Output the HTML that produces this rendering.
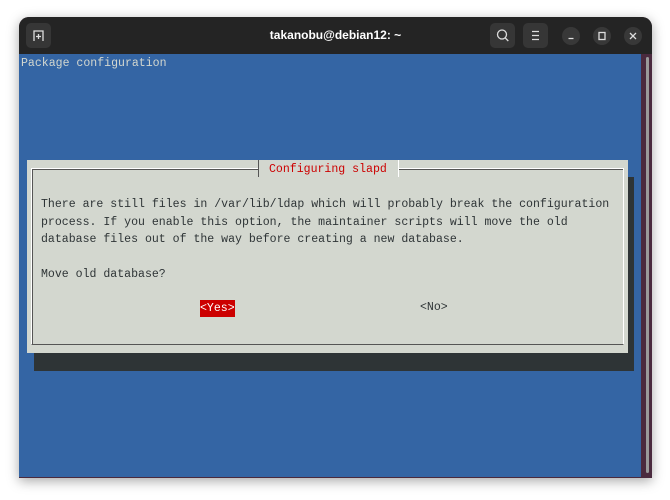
<!DOCTYPE html>
<html><head><style>
body{margin:0;width:670px;height:500px;background:#fff;position:relative;overflow:hidden;font-family:"Liberation Mono",monospace;}
.win{position:absolute;left:19px;top:17px;width:633px;height:461px;background:#4a2a3e;border-radius:10px 10px 0 0;box-shadow:0 3px 12px rgba(0,0,0,.35);overflow:hidden}
.tb{position:absolute;left:0;top:0;width:633px;height:37px;background:#242424;}
.title{position:absolute;left:0;right:0;top:11px;text-align:center;color:#fff;font:bold 12px "Liberation Sans",sans-serif}
.btn{position:absolute;top:6px;width:25px;height:25px;background:#363636;border-radius:5px}
.cbtn{position:absolute;top:10px;width:18px;height:18px;border-radius:50%;background:#383838}
.term{position:absolute;left:0;top:37px;width:622px;height:423px;background:#3465a4}
.sb{position:absolute;left:627px;top:40px;width:3px;height:416px;background:#9a9a9a;border-radius:2px}
.t{position:absolute;font-size:11.55px;line-height:17.6px;white-space:pre;color:#2e3436}
</style></head><body>
<div class="win">
 <div class="tb">
  <div class="btn" style="left:7px"><svg width="25" height="25"><path d="M8 18V8h9v10M12.5 11v5M10 13.5h5" stroke="#ddd" stroke-width="1.3" fill="none"/></svg></div>
  <div class="title">takanobu@debian12: ~</div>
  <div class="btn" style="left:471px"><svg width="25" height="25"><circle cx="12" cy="11.5" r="4.5" stroke="#ddd" stroke-width="1.3" fill="none"/><path d="M15.3 15l3 3" stroke="#ddd" stroke-width="1.3"/></svg></div>
  <div class="btn" style="left:504px"><svg width="25" height="25"><path d="M9 8.5h7M9 12.5h7M9 16.5h7" stroke="#ddd" stroke-width="1.3"/></svg></div>
  <div class="cbtn" style="left:543px"><svg width="18" height="18"><path d="M6.5 11.5h5" stroke="#ddd" stroke-width="1.3"/></svg></div>
  <div class="cbtn" style="left:574px"><svg width="18" height="18"><rect x="6" y="5.5" width="6" height="7" stroke="#ddd" stroke-width="1.3" fill="none"/></svg></div>
  <div class="cbtn" style="left:605px"><svg width="18" height="18"><path d="M6 6l6 6M12 6l-6 6" stroke="#ddd" stroke-width="1.3"/></svg></div>
 </div>
 <div class="term"></div>
 <div class="sb"></div>
</div>
<div class="t" style="left:21px;top:55px;color:#d3d7cf">Package configuration</div>
<div style="position:absolute;left:34px;top:177px;width:600px;height:194px;background:#2e3436"></div>
<div style="position:absolute;left:27px;top:160px;width:601px;height:193px;background:#d3d7cf"></div>
<div style="position:absolute;left:31px;top:168px;width:591px;height:175px;border:1px solid #555;border-right-color:#fff;border-bottom-color:#555;border-top-color:#fff;border-left-color:#fff;box-shadow:inset 1px 1px 0 #555"></div>
<div style="position:absolute;left:258px;top:160px;width:139px;height:17px;background:#d3d7cf;border-left:1px solid #555;border-right:1px solid #fff"></div>
<div class="t" style="left:269px;top:161px;color:#cc0000">Configuring slapd</div>
<div class="t" style="left:41px;top:196px">There are still files in /var/lib/ldap which will probably break the configuration
process. If you enable this option, the maintainer scripts will move the old
database files out of the way before creating a new database.

Move old database?</div>
<div class="t" style="left:200px;top:300px;height:17px;line-height:17px;background:#cc0000;color:#fff">&lt;Yes&gt;</div>
<div class="t" style="left:420px;top:299px">&lt;No&gt;</div>
</body></html>
